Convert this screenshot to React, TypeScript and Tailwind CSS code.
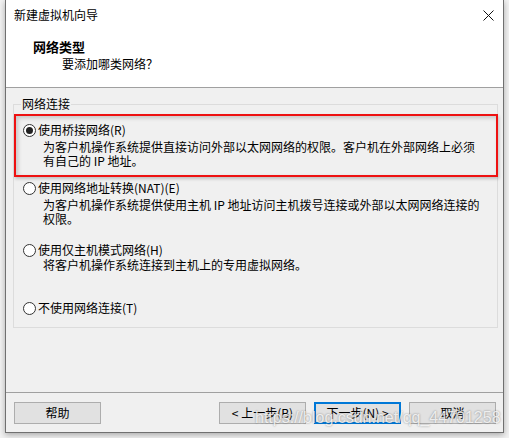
import React from "react";

const cjk = { fontFamily: '"Noto Sans CJK SC", "Noto Sans", sans-serif' };

function Radio({ checked }: { checked?: boolean }) {
  return (
    <span className="w-[13px] h-[13px] rounded-full border border-[#333] bg-white flex items-center justify-center shrink-0">
      {checked && <span className="w-[7px] h-[7px] rounded-full bg-[#222]" />}
    </span>
  );
}

function Option({
  label,
  lines,
  checked,
  className,
  descClass,
}: {
  label: string;
  lines: string[];
  checked?: boolean;
  className?: string;
  descClass?: string;
}) {
  return (
    <div className={className}>
      <div className="flex items-center gap-[2px] h-[16px] leading-[16px]">
        <Radio checked={checked} />
        <span>{label}</span>
      </div>
      {lines.length > 0 && (
        <div className={"ml-[20px] leading-[14px] " + (descClass ?? "mt-[2px]")}>
          {lines.map((l, i) => (
            <div key={i} className="whitespace-nowrap">
              {l}
            </div>
          ))}
        </div>
      )}
    </div>
  );
}

function Button({ children, primary }: { children: React.ReactNode; primary?: boolean }) {
  return (
    <button
      className={
        "w-[87px] h-[22px] bg-[#e1e1e1] text-[12px] leading-none text-black flex items-center justify-center " +
        (primary ? "border-2 border-[#0078d7]" : "border border-[#adadad]")
      }
    >
      {children}
    </button>
  );
}

export default function App() {
  return (
    <div className="w-[509px] h-[438px] bg-[#f2f2f2] overflow-hidden relative text-black text-[12px]" style={cjk}>
      <div className="ml-[5px] w-[499px] h-[433px] border-x border-b border-[#707070] bg-[#f0f0f0] flex flex-col shadow-[0_2px_6px_rgba(0,0,0,0.3)]">
        {/* title + header */}
        <div className="bg-white border-b border-[#a0a0a0]">
          <div className="h-[30px] flex items-center justify-between pl-[8px] pr-[8px]">
            <span className="leading-none">新建虚拟机向导</span>
            <svg width="11" height="11" viewBox="0 0 11 11" className="mr-[1px]">
              <path d="M0.5 0.5 L10.5 10.5 M10.5 0.5 L0.5 10.5" stroke="#111" strokeWidth="1" fill="none" />
            </svg>
          </div>
          <div className="h-[57px] pt-[8px]">
            <div className="pl-[27px] text-[13px] font-bold leading-[17px]">网络类型</div>
            <div className="pl-[56px] leading-[17px]">要添加哪类网络？</div>
          </div>
        </div>

        {/* body */}
        <div className="h-[304px] pt-[16px] pl-[7px] pr-[5px]">
          <div className="relative h-[224px] border border-[#dcdcdc] pt-[17px] pl-[9px]">
            <span className="absolute -top-[9px] left-[7px] bg-[#f0f0f0] px-[1px] leading-[16px]">网络连接</span>

            <Option
              checked
              label="使用桥接网络(R)"
              lines={[
                "为客户机操作系统提供直接访问外部以太网网络的权限。客户机在外部网络上必须",
                "有自己的 IP 地址。",
              ]}
            />
            <Option
              className="mt-[12px]"
              label="使用网络地址转换(NAT)(E)"
              lines={["为客户机操作系统提供使用主机 IP 地址访问主机拨号连接或外部以太网网络连接的", "权限。"]}
            />
            <Option
              className="mt-[16px]"
              descClass="mt-0"
              label="使用仅主机模式网络(H)"
              lines={["将客户机操作系统连接到主机上的专用虚拟网络。"]}
            />
            <Option className="mt-[28px]" label="不使用网络连接(T)" lines={[]} />

            {/* red annotation box */}
            <div className="absolute left-0 top-[9px] w-[484px] h-[63px] border-2 border-[#ee1111] shadow-[inset_2px_2px_4px_rgba(0,0,0,0.18),1px_2px_3px_rgba(0,0,0,0.2)] pointer-events-none" />
          </div>
        </div>

        {/* footer */}
        <div className="h-[40px] border-t border-[#a0a0a0] pt-[9px] pl-[8px] pr-[7px] flex">
          <Button>帮助</Button>
          <div className="ml-auto flex gap-[8px]">
            <Button>&lt; 上一步(B)</Button>
            <Button primary>下一步(N) &gt;</Button>
            <Button>取消</Button>
          </div>
        </div>
      </div>

      {/* watermark */}
      <div
        className="absolute left-[255px] top-[408px] text-[16px] leading-[20px] text-white/80 [text-shadow:0_0_2px_rgba(0,0,0,0.45)] whitespace-nowrap pointer-events-none"
        style={{ fontFamily: '"Liberation Sans", Arial, sans-serif' }}
      >
        https://blog.csdn.net/qq_44701258
      </div>
    </div>
  );
}
